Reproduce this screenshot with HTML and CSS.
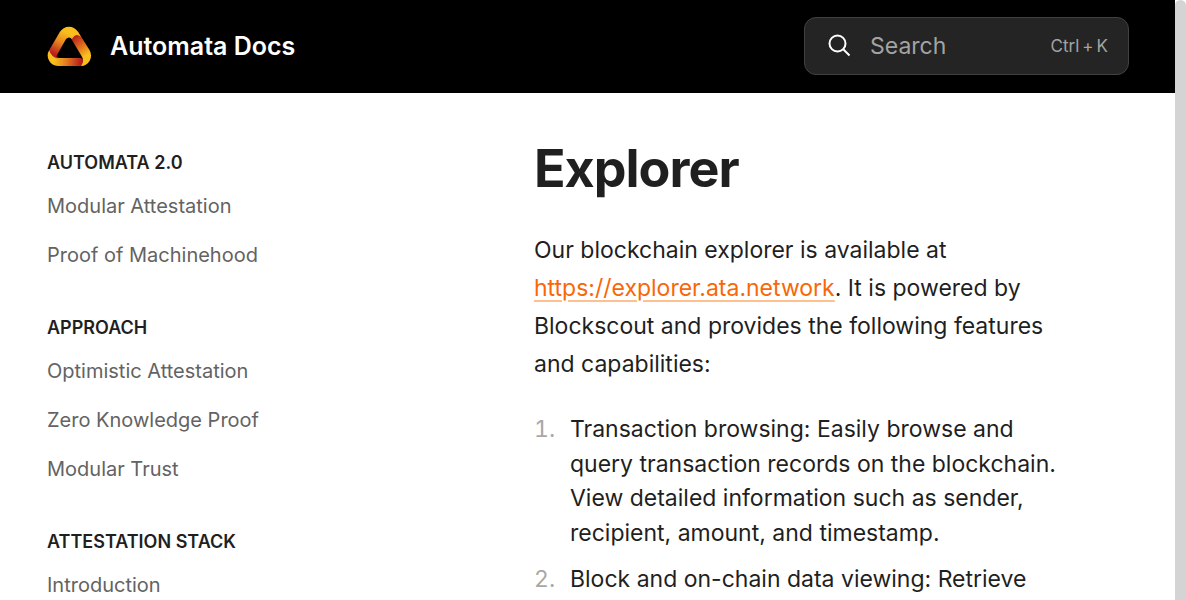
FILE: index.html
```html
<!DOCTYPE html>
<html lang="en">
<head>
<meta charset="utf-8">
<title>Explorer - Automata Docs</title>
<link rel="stylesheet" href="styles.css">
</head>
<body>
<div class="app">
<div class="page">
<header class="header">
<a class="brand" href="#"><svg class="logo" viewBox="3 3 45 43" aria-hidden="true">
<defs>
<linearGradient id="left" gradientUnits="userSpaceOnUse" x1="21" y1="10" x2="10" y2="32"><stop offset="0" stop-color="#f9bd1e"/><stop offset=".45" stop-color="#e8861f"/><stop offset="1" stop-color="#b91f1c"/></linearGradient>
<linearGradient id="right" gradientUnits="userSpaceOnUse" x1="30" y1="15" x2="43" y2="33"><stop offset="0" stop-color="#b81f1c"/><stop offset=".5" stop-color="#df6b1c"/><stop offset="1" stop-color="#f9bf1e"/></linearGradient>
<linearGradient id="base" gradientUnits="userSpaceOnUse" x1="37" y1="40" x2="10" y2="38"><stop offset="0" stop-color="#b51c1b"/><stop offset=".5" stop-color="#e27420"/><stop offset="1" stop-color="#f9bf1e"/></linearGradient>
</defs>
<path fill="url(#base)" d="M38 43.500Q37 44 35 44H14A10.500 10.500 0 0 1 5.300 28Q8 35 15 36H37Q41 38 38 43.500Z"/>
<path fill="url(#right)" d="M26 14 34.200 10 45.500 28A10.500 10.500 0 0 1 37 44Q41 39 37.500 34L28 18Z"/>
<path fill="url(#left)" d="M5.300 28 15.800 10A10.800 10.800 0 0 1 34.200 10L37 15Q32 10 28 17Q25 14 22 17L13 33Q12 35 14 36.500Q7 35 5.300 28Z"/>
</svg><span>Automata Docs</span></a>
<label class="search"><svg class="search-icon" viewBox="0 0 24 24" aria-hidden="true"><circle cx="9.500" cy="9.500" r="8"/><path d="m15.500 15.500 6 6"/></svg>
<input class="search-input" type="search" placeholder="Search" aria-label="Search"><span class="shortcut"><span>Ctrl</span><span>+</span><span>K</span></span></label>
</header>
<div class="body">
<nav class="sidebar" aria-label="Documentation">
<section class="group"><h2>Automata 2.0</h2><a href="#">Modular Attestation</a><a href="#">Proof of Machinehood</a></section>
<section class="group"><h2>Approach</h2><a href="#">Optimistic Attestation</a><a href="#">Zero Knowledge Proof</a><a href="#">Modular Trust</a></section>
<section class="group"><h2>Attestation Stack</h2><a href="#">Introduction</a></section>
</nav>
<main class="content">
<h1>Explorer</h1>
<p>Our blockchain explorer is available at <a href="#">https://explorer.ata.network</a>. It is powered by Blockscout and provides the following features and capabilities:</p>
<ol>
<li>Transaction browsing: Easily browse and query transaction records on the blockchain. View detailed information such as sender, recipient, amount, and timestamp.</li>
<li>Block and on-chain data viewing: Retrieve</li>
</ol>
</main>
</div>
</div>
<div class="scrollbar"></div>
</div>
</body>
</html>
```
FILE: styles.css
```css
* { box-sizing: border-box; }
body { margin: 0; font-family: Inter, "Liberation Sans", sans-serif; color: #1f1f1f; background: #fff; }
.app { display: flex; height: 100vh; overflow: hidden; }
.page { flex: 1; min-width: 0; }
.scrollbar { width: 11px; background: #d4d4d4; border-radius: 6px 6px 0 0; }
.header { display: flex; align-items: center; justify-content: space-between; padding: 17px 46px 18px 47px; background: #000; }
.brand { display: flex; align-items: center; gap: 18px; color: #fff; font-size: 25px; font-weight: 600; text-decoration: none; }
.logo { width: 45px; height: 43px; }
.search { display: flex; align-items: center; width: 325px; height: 58px; padding: 0 20px 0 23px; background: #242424; border: 1px solid #414141; border-radius: 12px; }
.search-icon { flex: none; width: 24px; height: 24px; fill: none; stroke: #fff; stroke-width: 2; }
.search-input { flex: 1; min-width: 0; margin-left: 18px; padding: 0; border: 0; outline: 0; background: none; color: #fff; font: 23px Inter, sans-serif; }
.search-input::placeholder { color: #a3a3a3; opacity: 1; }
.shortcut { display: flex; gap: 3px; color: #a3a3a3; font-size: 17px; }
.body { display: grid; grid-template-columns: 487px minmax(0, 1fr); padding: 0 110px 0 47px; }
.sidebar { padding-top: 57px; }
.group { margin-bottom: 35px; }
.group h2 { margin: 0 0 7px; font-size: 18px; line-height: 25px; font-weight: 600; text-transform: uppercase; }
.group a { display: block; padding: 11px 0; color: #636363; font-size: 20px; line-height: 27px; text-decoration: none; }
.content { padding-top: 43px; }
.content h1 { margin: 0 0 29px; font-size: 52px; line-height: 66px; letter-spacing: -1px; font-weight: 700; }
.content p { margin: 0; font-size: 23px; line-height: 38px; }
.content p a { color: #f96706; text-decoration: underline; text-decoration-color: #ffc08f; text-decoration-thickness: 2px; text-underline-offset: 4px; }
.content ol { display: grid; gap: 12px; margin: 29px 0 0; padding: 0; font-size: 23px; line-height: 1.5; list-style: none; counter-reset: item; }
.content li { display: grid; grid-template-columns: 36px minmax(0, 1fr); counter-increment: item; }
.content li::before { content: counter(item) "."; color: #a8a8a8; font-variant-numeric: tabular-nums; }
```
